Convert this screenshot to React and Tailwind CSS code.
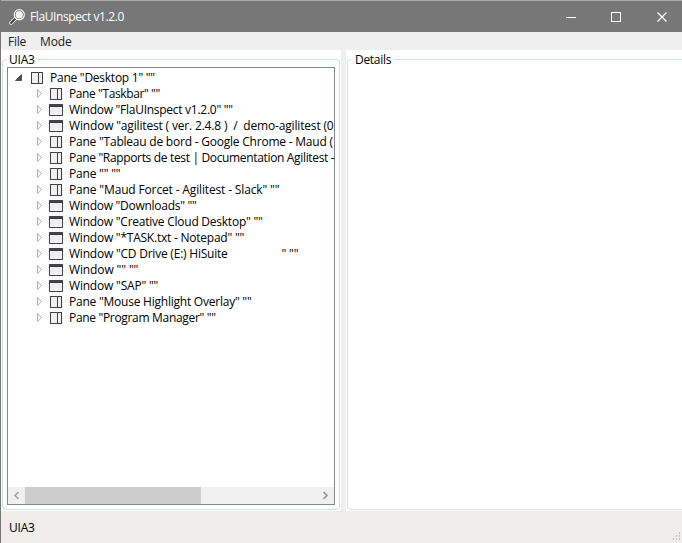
import React from "react";

const rows = [
  ["pane", 'Pane "Taskbar" ""', "tracking-[-0.4px]"],
  ["window", 'Window "FlaUInspect v1.2.0" ""', "tracking-[-0.27px]"],
  ["window", 'Window "agilitest ( ver. 2.4.8 )  /  demo-agilitest (0', "tracking-[-0.17px]"],
  ["pane", 'Pane "Tableau de bord - Google Chrome - Maud (', "tracking-[-0.22px]"],
  ["pane", 'Pane "Rapports de test | Documentation Agilitest -', "tracking-[-0.34px]"],
  ["pane", 'Pane "" ""', "tracking-[-0.2px]"],
  ["pane", 'Pane "Maud Forcet - Agilitest - Slack" ""', "tracking-[-0.15px]"],
  ["window", 'Window "Downloads" ""', "tracking-[-0.27px]"],
  ["window", 'Window "Creative Cloud Desktop" ""', "tracking-[-0.24px]"],
  ["window", 'Window "*TASK.txt - Notepad" ""', "tracking-[-0.23px]"],
  ["window", 'Window "CD Drive (E:) HiSuite', "tracking-[-0.22px]", '" ""'],
  ["window", 'Window "" ""', "tracking-[-0.12px]"],
  ["window", 'Window "SAP" ""', "tracking-[-0.2px]"],
  ["pane", 'Pane "Mouse Highlight Overlay" ""', "tracking-[-0.23px]"],
  ["pane", 'Pane "Program Manager" ""', "tracking-[-0.32px]"],
];

function NodeIcon({ kind }) {
  return kind === "pane" ? (
    <svg className="block h-4 w-4 shrink-0" viewBox="0 0 16 16" shapeRendering="crispEdges">
      <path d="M2.5 2.5h11v11h-11z" fill="#f0eff1" stroke="#424242" />
      <path d="M9.5 2.5v11" stroke="#424242" />
    </svg>
  ) : (
    <svg className="block h-4 w-4 shrink-0" viewBox="0 0 16 16" shapeRendering="crispEdges">
      <path d="M1.5 3.5h13v10h-13z" fill="#f0eff1" stroke="#424242" />
      <path d="M1 2h14v3H1z" fill="#424242" />
    </svg>
  );
}

function Group({ title, className, legendClassName, children }) {
  return (
    <fieldset className={"m-0 min-w-0 rounded-[4px] border border-[#d5dfe5] " + className}>
      <legend className={"ml-[3px] h-[15px] pr-[3px] leading-4 " + legendClassName}>{title}</legend>
      {children}
    </fieldset>
  );
}

export default function App() {
  return (
    <div className="flex h-[543px] w-[682px] cursor-default flex-col overflow-hidden border-l border-[#777] bg-white font-['Open_Sans','Noto_Sans',sans-serif] text-[12px] text-black">
      <header className="flex h-8 shrink-0 items-center border-t border-[#a9adab] bg-[#777] text-white">
        <svg className="ml-[8px] h-4 w-4" viewBox="0 0 16 16" fill="none">
          <path d="M7 9L2 14" stroke="#fff" strokeWidth="3.5" strokeLinecap="round" />
          <path d="M7 9L2 14" stroke="#333" strokeWidth="1.8" strokeLinecap="round" />
          <circle cx="10.3" cy="5.7" r="5" fill="#555" stroke="#fff" strokeWidth="1.2" />
          <circle cx="10.3" cy="5.7" r="3.7" fill="#f2f2f2" />
        </svg>
        <span className="ml-[5px] flex-1 tracking-[-0.4px]">FlaUInspect v1.2.0</span>
        <svg className="mr-[14px] h-[10px] w-[102px]" viewBox="0 0 102 10" fill="none" stroke="#fff">
          <path d="M0 5.5h10M45.5.5h9v9h-9z" shapeRendering="crispEdges" />
          <path d="M91.5.5l9 9M100.5.5l-9 9" strokeWidth="1.2" />
        </svg>
      </header>
      <nav className="flex h-[18px] shrink-0 items-center gap-[14px] bg-[#efefef] pl-[7px] pt-px text-[#212121]">
        <span className="tracking-[-0.25px]">File</span>
        <span className="tracking-[-0.1px]">Mode</span>
      </nav>
      <main className="flex h-[461px] shrink-0">
        <section className="w-[340px] px-px pt-[2px]">
          <Group title="UIA3" className="h-[458px] w-[338px]" legendClassName="pl-[3px] tracking-[-0.2px]">
            <div className="ml-1 flex h-[438px] w-[328px] flex-col border border-[#828790] bg-white">
              <div className="min-h-0 flex-1 overflow-hidden whitespace-pre pl-[7px] pr-px pt-[2px] leading-4">
                <div className="flex h-4 items-center">
                  <svg className="-mr-[2px] h-4 w-4 shrink-0" viewBox="0 0 16 16">
                    <path d="M6.500 4.500v6h-6z" fill="#505050" stroke="#303030" strokeWidth=".7" />
                  </svg>
                  <NodeIcon kind="pane" />
                  <span className="ml-[5px] tracking-[-0.25px]">{'Pane "Desktop 1" ""'}</span>
                </div>
                {rows.map(([kind, text, tracking, tail]) => (
                  <div className="flex h-4 items-center pl-[19px]" key={text}>
                    <svg className="-mr-[2px] h-4 w-4 shrink-0" viewBox="0 0 16 16">
                      <path d="M3.5 3.5v8l4-4z" fill="#fff" stroke="#b0b0b0" />
                    </svg>
                    <NodeIcon kind={kind} />
                    <span className={"ml-[5px] shrink-0 " + tracking}>{text}</span>
                    {tail && <span className="ml-[54px] tracking-[-0.2px]">{tail}</span>}
                  </div>
                ))}
              </div>
              <div className="flex h-[17px] items-center bg-[#f0f0f0]">
                <svg className="h-[17px] w-[17px]" viewBox="0 0 17 17" fill="none" stroke="#a0a0a0" strokeWidth="1.5">
                  <path d="M10.5 5l-3.5 3.5 3.5 3.5" />
                </svg>
                <div className="h-[17px] w-[176px] bg-[#cdcdcd]" />
                <svg className="ml-auto h-[17px] w-[17px]" viewBox="0 0 17 17" fill="none" stroke="#909090" strokeWidth="1.5">
                  <path d="M6.500 5l3.5 3.5-3.500 3.500" />
                </svg>
              </div>
            </div>
          </Group>
        </section>
        <div className="w-[5px] bg-[#efefef]" />
        <section className="min-w-0 flex-1 overflow-hidden pl-px pt-[2px]">
          <Group title="Details" className="h-[458px] w-[345px]" legendClassName="pl-1 tracking-[-0.3px]" />
        </section>
      </main>
      <footer className="flex h-8 shrink-0 items-center justify-between bg-[#f0eceb] pl-2">
        <span className="pt-[2px] tracking-[-0.2px]">UIA3</span>
        <svg className="h-3 w-3 self-end" viewBox="0 0 12 12" fill="#b5bcd0" shapeRendering="crispEdges">
          <path d="M9 1h1v2H9zM6 4h1v2H6zM9 4h1v2H9zM3 7h1v2H3zM6 7h1v2H6zM9 7h1v2H9z" />
        </svg>
      </footer>
    </div>
  );
}
